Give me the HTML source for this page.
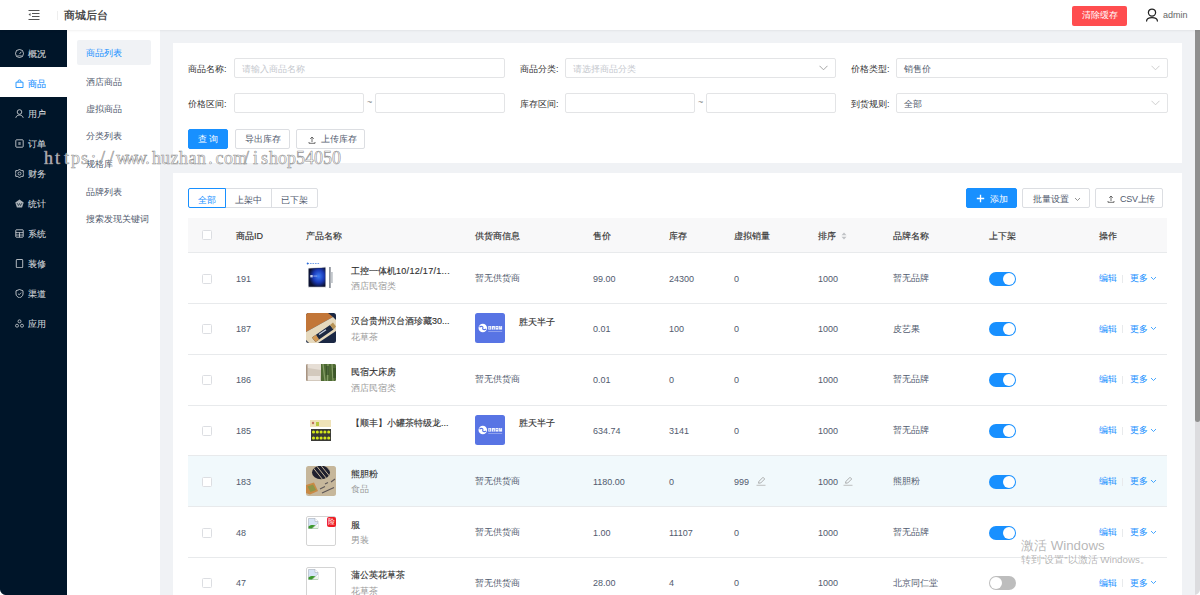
<!DOCTYPE html>
<html><head><meta charset="utf-8">
<style>
*{box-sizing:border-box;margin:0;padding:0}
html,body{width:1200px;height:595px;overflow:hidden;background:#f0f2f5;font-family:"Liberation Sans",sans-serif;font-size:9px;color:#515a6e}
.a{position:absolute}
.t{position:absolute;white-space:nowrap;line-height:12px}
#hdr{left:0;top:0;width:1200px;height:30px;background:#fff;box-shadow:0 1px 2px rgba(0,0,0,.06);z-index:3}
#side{left:0;top:30px;width:67px;height:565px;background:#001529}
.si{position:absolute;left:0;width:67px;height:30px;color:rgba(255,255,255,.78)}
.si .tx{position:absolute;left:28px;top:10.8px;line-height:12px;font-size:9px;-webkit-text-stroke:.1px currentColor}
.si svg{position:absolute;left:15px;top:11.5px}
.si.on{background:#fff;color:#1890ff}
#sub{left:67px;top:30px;width:93px;height:565px;background:#fff}
.ss{position:absolute;left:86px;line-height:12px;color:#515a6e}
.card{position:absolute;left:173px;width:1009px;background:#fff}
.lbl{position:absolute;line-height:12px;color:#333}
.inp{position:absolute;height:20px;border:1px solid #e3e4e6;border-radius:2px;background:#fff}
.ph{position:absolute;left:7px;top:4px;line-height:12px;color:#c5c8ce}
.vl{position:absolute;left:7px;top:4px;line-height:12px;color:#515a6e}
.chev{position:absolute;right:7px;top:6px}
.btn{position:absolute;height:20px;border:1px solid #dcdee2;border-radius:2px;background:#fff;color:#515a6e;line-height:19px;text-align:center}
.btn.pri{background:#1890ff;border-color:#1890ff;color:#fff}
</style><style>
.cb{position:absolute;width:10px;height:10px;border:1px solid #dcdee2;border-radius:1.5px;background:#fff}
.th{position:absolute;white-space:nowrap;line-height:12px;color:#333;-webkit-text-stroke:.15px #333}
.td{position:absolute;white-space:nowrap;line-height:12px;color:#515a6e}
.nm{position:absolute;white-space:nowrap;line-height:12px;color:#333;-webkit-text-stroke:.15px #333}
.lk{color:#1890ff}
.tg{position:absolute;width:27px;height:14px;border-radius:7px;background:#1890ff}
.tg.off{background:#bdbdbd}
.kn{position:absolute;top:1px;width:12px;height:12px;border-radius:6px;background:#fff}
.wm{position:absolute;white-space:nowrap;font-family:"Liberation Serif",serif;font-size:18px;line-height:20px;color:rgba(255,255,255,.8);-webkit-text-stroke:.6px rgba(140,140,140,.95);z-index:10}
</style></head><body>

<!-- header -->
<div id="hdr" class="a">
  <svg class="a" style="left:28px;top:10px" width="12" height="10" viewBox="0 0 12 10">
    <rect x="0.5" y="0" width="11" height="1" fill="#555"/>
    <rect x="4" y="3" width="7.5" height="1" fill="#555"/>
    <rect x="4" y="6" width="7.5" height="1" fill="#555"/>
    <rect x="0.5" y="9" width="11" height="1" fill="#555"/>
    <path d="M0.5 4.5 L2.5 3 L2.5 6 Z" fill="#555"/>
  </svg>
  <div class="a" style="left:57px;top:11px;width:1px;height:9px;background:#eee"></div>
  <div class="t" style="left:63.5px;top:9px;font-size:11.4px;line-height:13px;color:#333;-webkit-text-stroke:.25px #333">商城后台</div>
  <div class="a" style="left:1072px;top:6px;width:55px;height:20px;background:#ff4d4f;border-radius:2px"></div>
  <div class="t" style="left:1082px;top:9px;color:#fff">清除缓存</div>
  <svg class="a" style="left:1145px;top:7.5px" width="14" height="14" viewBox="0 0 14 14"><circle cx="7" cy="4.6" r="3.6" fill="none" stroke="#222" stroke-width="1.25"/><path d="M1.6 13 C1.8 8.6 12.2 8.6 12.4 13" fill="none" stroke="#222" stroke-width="1.25" stroke-linecap="round"/></svg>
  <div class="t" style="left:1163px;top:9px;color:#666">admin</div>
</div>

<!-- sidebar -->
<div id="side" class="a">
  <div class="si" style="top:7px"><svg width="9" height="9" viewBox="0 0 9 9"><circle cx="4.5" cy="4.5" r="4" fill="none" stroke="currentColor" stroke-width=".9"/><path d="M4.5 5 L6.3 2.8" stroke="currentColor" stroke-width=".9"/><path d="M2.2 6.8 H6.8" stroke="currentColor" stroke-width=".7"/></svg><div class="tx">概况</div></div>
  <div class="si on" style="top:37px"><svg width="9" height="9" viewBox="0 0 9 9"><path d="M1 3.2 H8 V8.5 H1 Z" fill="none" stroke="currentColor" stroke-width=".9"/><path d="M3 3.2 V2 C3 .6 6 .6 6 2 V3.2" fill="none" stroke="currentColor" stroke-width=".9"/></svg><div class="tx">商品</div></div>
  <div class="si" style="top:67px"><svg width="9" height="9" viewBox="0 0 9 9"><circle cx="4.5" cy="3" r="2.3" fill="none" stroke="currentColor" stroke-width=".9"/><path d="M.8 8.8 C1.3 5.2 7.7 5.2 8.2 8.8" fill="none" stroke="currentColor" stroke-width=".9"/></svg><div class="tx">用户</div></div>
  <div class="si" style="top:97px"><svg width="9" height="9" viewBox="0 0 9 9"><rect x=".8" y=".8" width="7.4" height="7.4" rx=".8" fill="none" stroke="currentColor" stroke-width=".9"/><rect x="3.3" y="3" width="2.4" height="3" fill="currentColor" opacity=".6"/></svg><div class="tx">订单</div></div>
  <div class="si" style="top:127px"><svg width="9" height="9" viewBox="0 0 9 9"><path d="M4.5 .5 L6.3 1.5 L8.3 1.7 L8.3 3.5 L8.8 4.5 L8.3 5.5 L8.3 7.3 L6.3 7.5 L4.5 8.6 L2.7 7.5 L.7 7.3 L.7 5.5 L.2 4.5 L.7 3.5 L.7 1.7 L2.7 1.5 Z" fill="none" stroke="currentColor" stroke-width=".9"/><circle cx="4.5" cy="4.5" r="1.5" fill="none" stroke="currentColor" stroke-width=".8"/></svg><div class="tx">财务</div></div>
  <div class="si" style="top:157px"><svg width="9" height="9" viewBox="0 0 9 9"><path d="M4.5 .4 L8.7 3.4 L7.1 8.4 L1.9 8.4 L.3 3.4 Z" fill="currentColor" opacity=".85"/><path d="M2 4 L3.5 6.5 L4.5 4.5 L5.5 6.5 L7 4" fill="none" stroke="#001529" stroke-width=".6"/></svg><div class="tx">统计</div></div>
  <div class="si" style="top:187px"><svg width="9" height="9" viewBox="0 0 9 9"><rect x=".8" y=".8" width="7.4" height="7.4" rx=".6" fill="none" stroke="currentColor" stroke-width=".9"/><path d="M.8 3.6 H8.2 M.8 6 H8.2 M4.5 3.6 V8.2" stroke="currentColor" stroke-width=".8"/></svg><div class="tx">系统</div></div>
  <div class="si" style="top:217px"><svg width="9" height="9" viewBox="0 0 9 9"><rect x="1.3" y=".5" width="6.4" height="8.2" rx=".6" fill="none" stroke="currentColor" stroke-width=".9"/></svg><div class="tx">装修</div></div>
  <div class="si" style="top:247px"><svg width="9" height="9" viewBox="0 0 9 9"><path d="M4.5 .5 L8 1.8 V5 C8 7 6 8.3 4.5 8.8 C3 8.3 1 7 1 5 V1.8 Z" fill="none" stroke="currentColor" stroke-width=".9"/><path d="M3 4.7 L4.2 5.8 L6.2 3.6" fill="none" stroke="currentColor" stroke-width=".8"/></svg><div class="tx">渠道</div></div>
  <div class="si" style="top:277px"><svg width="9" height="9" viewBox="0 0 9 9"><circle cx="4.5" cy="2.3" r="1.5" fill="none" stroke="currentColor" stroke-width=".8"/><circle cx="2" cy="6.7" r="1.5" fill="none" stroke="currentColor" stroke-width=".8"/><circle cx="7" cy="6.7" r="1.5" fill="none" stroke="currentColor" stroke-width=".8"/></svg><div class="tx">应用</div></div>
</div>

<!-- sub sidebar -->
<div id="sub" class="a">
  <div class="a" style="left:10px;top:10px;width:74px;height:25px;background:#f0f2f5;border-radius:2px"></div>
</div>
<div class="ss" style="top:47px;color:#1890ff">商品列表</div>
<div class="ss" style="top:75.5px">酒店商品</div>
<div class="ss" style="top:103px">虚拟商品</div>
<div class="ss" style="top:130px">分类列表</div>
<div class="ss" style="top:158px">规格库</div>
<div class="ss" style="top:185.5px">品牌列表</div>
<div class="ss" style="top:213px">搜索发现关键词</div>

<!-- filter card -->
<div class="card" style="top:43px;height:120px"></div>


<div class="lbl" style="left:188px;top:63px">商品名称:</div>
<div class="inp" style="left:234px;top:58px;width:271px"><div class="ph">请输入商品名称</div></div>
<div class="lbl" style="left:520px;top:63px">商品分类:</div>
<div class="inp" style="left:565px;top:58px;width:271px"><div class="ph">请选择商品分类</div><svg class="chev" width="9" height="6" viewBox="0 0 9 6"><path d="M.5 .8 L4.5 4.8 L8.5 .8" fill="none" stroke="#9a9a9a" stroke-width=".9"/></svg></div>
<div class="lbl" style="left:851px;top:63px">价格类型:</div>
<div class="inp" style="left:896px;top:58px;width:272px"><div class="vl">销售价</div><svg class="chev" width="9" height="6" viewBox="0 0 9 6"><path d="M.5 .8 L4.5 4.8 L8.5 .8" fill="none" stroke="#c8c8c8" stroke-width=".9"/></svg></div>

<div class="lbl" style="left:188px;top:98px">价格区间:</div>
<div class="inp" style="left:234px;top:93px;width:130px"></div>
<div class="t" style="left:367px;top:96px;color:#888">~</div>
<div class="inp" style="left:375px;top:93px;width:130px"></div>
<div class="lbl" style="left:520px;top:98px">库存区间:</div>
<div class="inp" style="left:565px;top:93px;width:130px"></div>
<div class="t" style="left:698px;top:96px;color:#888">~</div>
<div class="inp" style="left:706px;top:93px;width:130px"></div>
<div class="lbl" style="left:851px;top:98px">到货规则:</div>
<div class="inp" style="left:896px;top:93px;width:272px"><div class="vl">全部</div><svg class="chev" width="9" height="6" viewBox="0 0 9 6"><path d="M.5 .8 L4.5 4.8 L8.5 .8" fill="none" stroke="#c8c8c8" stroke-width=".9"/></svg></div>

<div class="btn pri" style="left:188px;top:129px;width:40px">查 询</div>
<div class="btn" style="left:235px;top:129px;width:55px">导出库存</div>
<div class="btn" style="left:296px;top:129px;width:69px"><svg class="a" style="left:11px;top:5.5px" width="8" height="8" viewBox="0 0 8 8"><path d="M4 1 V6 M2.2 2.8 L4 1 L5.8 2.8 M1 6 V7.3 H7 V6" fill="none" stroke="#555" stroke-width=".85"/></svg><span style="position:absolute;left:24px;top:0">上传库存</span></div>

<!-- table card -->
<div class="card" style="top:173px;height:422px"></div>
<div class="a" style="left:188px;top:188px;width:130px;height:20px;border:1px solid #dcdee2;border-radius:2px;background:#fff"></div>
<div class="a" style="left:271px;top:188px;width:1px;height:20px;background:#dcdee2"></div>
<div class="a" style="left:188px;top:188px;width:38px;height:20px;border:1px solid #1890ff;border-radius:2px 0 0 2px;background:#fff"></div>
<div class="t" style="left:198px;top:193.5px;color:#1890ff">全部</div>
<div class="t" style="left:235px;top:193.5px;color:#515a6e">上架中</div>
<div class="t" style="left:281px;top:193.5px;color:#515a6e">已下架</div>
<div class="btn pri" style="left:966px;top:188px;width:51px"><svg class="a" style="left:9px;top:4.5px" width="9" height="9" viewBox="0 0 9 9"><path d="M4.5 .8 V8.2 M.8 4.5 H8.2" stroke="#fff" stroke-width="1.35"/></svg><span style="position:absolute;left:23px;top:.6px">添加</span></div>
<div class="btn" style="left:1022px;top:188px;width:68px"><span style="position:absolute;left:10px;top:.6px">批量设置</span><svg class="a" style="left:51px;top:7.5px" width="7" height="5" viewBox="0 0 7 5"><path d="M1 1 L3.5 3.5 L6 1" fill="none" stroke="#777" stroke-width=".8"/></svg></div>
<div class="btn" style="left:1095px;top:188px;width:68px"><svg class="a" style="left:11px;top:5.5px" width="8" height="8" viewBox="0 0 8 8"><path d="M4 1 V6 M2.2 2.8 L4 1 L5.8 2.8 M1 6 V7.3 H7 V6" fill="none" stroke="#555" stroke-width=".85"/></svg><span style="position:absolute;left:24px;top:.6px;letter-spacing:-.3px">CSV上传</span></div>
<div class="a" style="left:188px;top:218px;width:979px;height:35px;background:#f8f8f9;border-bottom:1px solid #e8eaec"></div>
<div class="cb" style="left:202px;top:230px"></div>
<div class="th" style="left:236px;top:229.5px">商品ID</div>
<div class="th" style="left:306px;top:229.5px">产品名称</div>
<div class="th" style="left:475px;top:229.5px">供货商信息</div>
<div class="th" style="left:593px;top:229.5px">售价</div>
<div class="th" style="left:669px;top:229.5px">库存</div>
<div class="th" style="left:734px;top:229.5px">虚拟销量</div>
<div class="th" style="left:818px;top:229.5px">排序</div>
<div class="th" style="left:893px;top:229.5px">品牌名称</div>
<div class="th" style="left:989px;top:229.5px">上下架</div>
<div class="th" style="left:1099px;top:229.5px">操作</div>
<svg class="a" style="left:841px;top:230.5px" width="6" height="10" viewBox="0 0 6 10"><path d="M.5 4.3 L3 1.5 L5.5 4.3 Z M.5 5.7 L3 8.5 L5.5 5.7 Z" fill="#c0c2c6"/></svg>
<div class="a" style="left:188px;top:303px;width:979px;height:1px;background:#e8eaec"></div>
<div class="cb" style="left:202px;top:273.6px"></div>
<div class="td" style="left:236px;top:272.6px">191</div>
<div class="a" style="left:306px;top:262.2px;width:30px;height:30px"><svg width="30" height="30" viewBox="0 0 30 30"><path d="M1.5 1.5 H14" stroke="#6a9ae8" stroke-width=".9" stroke-dasharray="1.6 .9"/><circle cx="1.6" cy="1.5" r=".9" fill="#2a6ad8"/>
<path d="M2 6 L20 4.8 L20 25.5 L2 25.5 Z" fill="#cfd2d7"/><path d="M2.8 6.8 L19.2 5.8 L19.2 24.6 L2.8 24.6 Z" fill="#0b1030"/><defs><radialGradient id="g1" cx=".6" cy=".45" r=".6"><stop offset="0" stop-color="#3c7cf4"/><stop offset=".55" stop-color="#1a3ab8"/><stop offset="1" stop-color="#0b1030"/></radialGradient></defs><path d="M2.8 6.8 L19.2 5.8 L19.2 24.6 L2.8 24.6 Z" fill="url(#g1)"/><rect x="4.3" y="13" width="2.4" height="2.4" fill="#e8eeff" opacity=".85"/><rect x="7.3" y="13.6" width="4" height=".9" fill="#c8d4ff" opacity=".7"/>
<rect x="23" y="5" width="1.8" height="21" fill="#8f959d"/><rect x="24.8" y="10" width="2" height="11" fill="#c3c7cc"/></svg></div>
<div class="nm" style="left:351px;top:264.6px">工控一体机<span style="letter-spacing:.3px">10/12/17/1...</span></div>
<div class="td" style="left:351px;top:279.9px;color:#999">酒店民宿类</div>
<div class="td" style="left:475px;top:271.8px">暂无供货商</div>
<div class="td" style="left:593px;top:272.6px">99.00</div>
<div class="td" style="left:669px;top:272.6px">24300</div>
<div class="td" style="left:734px;top:272.6px">0</div>
<div class="td" style="left:818px;top:272.6px">1000</div>
<div class="td" style="left:893px;top:271.8px">暂无品牌</div>
<div class="tg" style="left:989px;top:271.6px"><div class="kn" style="left:14px"></div></div>
<div class="td lk" style="left:1099px;top:271.8px">编辑</div>
<div class="a" style="left:1122px;top:274.6px;width:1px;height:8px;background:#e8eaec"></div>
<div class="td lk" style="left:1130px;top:271.8px">更多</div>
<div class="a" style="left:1150px;top:275.6px;width:7px;height:5px;line-height:0"><svg width="7" height="5" viewBox="0 0 7 5"><path d="M1 1 L3.5 3.5 L6 1" fill="none" stroke="#1890ff" stroke-width=".8"/></svg></div>
<div class="a" style="left:188px;top:354px;width:979px;height:1px;background:#e8eaec"></div>
<div class="cb" style="left:202px;top:324.4px"></div>
<div class="td" style="left:236px;top:323.4px">187</div>
<div class="a" style="left:306px;top:313.1px;width:30px;height:30px"><svg width="30" height="30" viewBox="0 0 30 30"><defs><clipPath id="c1"><rect width="30" height="30" rx="2.5"/></clipPath></defs><g clip-path="url(#c1)"><rect width="30" height="30" fill="#1b2844"/>
<path d="M0 0 H22 L27 4 L0 19 Z" fill="#c27638"/><path d="M0 19 L27 4 L30 7 V18 L12 30 H3 L0 27 Z" fill="#e6d9bd"/><path d="M6 24.5 L24 12 L27.5 16.5 L9.5 29 Z" fill="#1d2942"/><path d="M6 24.5 L10 21.8 L13.2 26.5 L9.5 29 Z" fill="#d49a55"/><path d="M24 12 L27 9.5 L30 13.5 L27.5 16.5 Z" fill="#b89458"/><path d="M13 21.5 L20 16.7" stroke="#c8d0e0" stroke-width="1.3"/></g></svg></div>
<div class="nm" style="left:351px;top:315.4px">汉台贵州汉台酒珍藏30...</div>
<div class="td" style="left:351px;top:330.7px;color:#999">花草茶</div>
<div class="a" style="left:475px;top:313.1px;width:30px;height:30px"><svg width="30" height="30" viewBox="0 0 30 30"><rect width="30" height="30" rx="2.5" fill="#5874e4"/><circle cx="7.8" cy="15" r="4.3" fill="#fff"/><path d="M4.5 14.2 C6 12.5 8.5 13.8 7.8 15 C7 16.2 9.5 17.5 11.2 15.8" fill="none" stroke="#5874e4" stroke-width="1.1"/><g fill="#fff" opacity=".92"><rect x="13.3" y="13" width="3" height="3.6"/><rect x="16.9" y="13" width="3" height="3.6"/><rect x="20.5" y="13" width="3" height="3.6"/><rect x="24.1" y="13" width="3" height="3.6"/></g><g fill="#5874e4"><rect x="14.5" y="13.6" width=".6" height="2.5"/><rect x="18" y="14.4" width=".6" height="2.2"/><rect x="21.2" y="14.2" width="1.5" height=".6"/><rect x="25" y="13.6" width="1.3" height=".6"/></g><rect x="13.2" y="18.2" width="14" height=".6" fill="#fff" opacity=".55"/></svg></div>
<div class="nm" style="left:519px;top:315.5px">胜天半子</div>
<div class="td" style="left:593px;top:323.4px">0.01</div>
<div class="td" style="left:669px;top:323.4px">100</div>
<div class="td" style="left:734px;top:323.4px">0</div>
<div class="td" style="left:818px;top:323.4px">1000</div>
<div class="td" style="left:893px;top:322.6px">皮艺果</div>
<div class="tg" style="left:989px;top:322.4px"><div class="kn" style="left:14px"></div></div>
<div class="td lk" style="left:1099px;top:322.6px">编辑</div>
<div class="a" style="left:1122px;top:325.4px;width:1px;height:8px;background:#e8eaec"></div>
<div class="td lk" style="left:1130px;top:322.6px">更多</div>
<div class="a" style="left:1150px;top:326.4px;width:7px;height:5px;line-height:0"><svg width="7" height="5" viewBox="0 0 7 5"><path d="M1 1 L3.5 3.5 L6 1" fill="none" stroke="#1890ff" stroke-width=".8"/></svg></div>
<div class="a" style="left:188px;top:405px;width:979px;height:1px;background:#e8eaec"></div>
<div class="cb" style="left:202px;top:375.2px"></div>
<div class="td" style="left:236px;top:374.2px">186</div>
<div class="a" style="left:306px;top:363.9px;width:30px;height:30px"><svg width="30" height="30" viewBox="0 0 30 30"><defs><clipPath id="c4"><rect width="30" height="17" rx="1.5"/></clipPath></defs><g clip-path="url(#c4)"><rect x="0" y="0" width="30" height="17" fill="#d3c9bd"/><path d="M0 0 H22 L15 6 L2 4 Z" fill="#e6ded5"/><rect x="0" y="0" width="1.5" height="17" fill="#a89482"/><rect x="2" y="12" width="12" height="4" fill="#ece6e0"/><rect x="15" y="0" width="15" height="17" fill="#4f6a34"/><path d="M17 0 L19 17 M22 0 L21.5 17 M26 0 L27 17" stroke="#a2b882" stroke-width="1.3" opacity=".65"/><rect x="20" y="2" width="3" height="9" fill="#2c4420" opacity=".55"/><rect x="27" y="4" width="3" height="10" fill="#2c4420" opacity=".5"/></g></svg></div>
<div class="nm" style="left:351px;top:366.2px">民宿大床房</div>
<div class="td" style="left:351px;top:381.5px;color:#999">酒店民宿类</div>
<div class="td" style="left:475px;top:373.4px">暂无供货商</div>
<div class="td" style="left:593px;top:374.2px">0.01</div>
<div class="td" style="left:669px;top:374.2px">0</div>
<div class="td" style="left:734px;top:374.2px">0</div>
<div class="td" style="left:818px;top:374.2px">1000</div>
<div class="td" style="left:893px;top:373.4px">暂无品牌</div>
<div class="tg" style="left:989px;top:373.2px"><div class="kn" style="left:14px"></div></div>
<div class="td lk" style="left:1099px;top:373.4px">编辑</div>
<div class="a" style="left:1122px;top:376.2px;width:1px;height:8px;background:#e8eaec"></div>
<div class="td lk" style="left:1130px;top:373.4px">更多</div>
<div class="a" style="left:1150px;top:377.2px;width:7px;height:5px;line-height:0"><svg width="7" height="5" viewBox="0 0 7 5"><path d="M1 1 L3.5 3.5 L6 1" fill="none" stroke="#1890ff" stroke-width=".8"/></svg></div>
<div class="a" style="left:188px;top:455px;width:979px;height:1px;background:#e8eaec"></div>
<div class="cb" style="left:202px;top:426.0px"></div>
<div class="td" style="left:236px;top:425.0px">185</div>
<div class="a" style="left:306px;top:414.7px;width:30px;height:30px"><svg width="30" height="30" viewBox="0 0 30 30"><rect x="4" y="5" width="21" height="7" fill="#efe2b8"/><rect x="10" y="7" width="3" height="4" fill="#b8c840"/><circle cx="7" cy="8" r="1.2" fill="#c07060"/><rect x="5" y="14" width="20" height="12" fill="#3a3a36"/>
<g fill="#d4e81a"><circle cx="7.5" cy="17" r="1.55"/><circle cx="11.3" cy="17" r="1.55"/><circle cx="15.1" cy="17" r="1.55"/><circle cx="18.9" cy="17" r="1.55"/><circle cx="22.7" cy="17" r="1.55"/><circle cx="7.5" cy="23" r="1.55"/><circle cx="11.3" cy="23" r="1.55"/><circle cx="15.1" cy="23" r="1.55"/><circle cx="18.9" cy="23" r="1.55"/><circle cx="22.7" cy="23" r="1.55"/></g></svg></div>
<div class="nm" style="left:351px;top:417.0px">【顺丰】小罐茶特级龙...</div>
<div class="a" style="left:475px;top:414.7px;width:30px;height:30px"><svg width="30" height="30" viewBox="0 0 30 30"><rect width="30" height="30" rx="2.5" fill="#5874e4"/><circle cx="7.8" cy="15" r="4.3" fill="#fff"/><path d="M4.5 14.2 C6 12.5 8.5 13.8 7.8 15 C7 16.2 9.5 17.5 11.2 15.8" fill="none" stroke="#5874e4" stroke-width="1.1"/><g fill="#fff" opacity=".92"><rect x="13.3" y="13" width="3" height="3.6"/><rect x="16.9" y="13" width="3" height="3.6"/><rect x="20.5" y="13" width="3" height="3.6"/><rect x="24.1" y="13" width="3" height="3.6"/></g><g fill="#5874e4"><rect x="14.5" y="13.6" width=".6" height="2.5"/><rect x="18" y="14.4" width=".6" height="2.2"/><rect x="21.2" y="14.2" width="1.5" height=".6"/><rect x="25" y="13.6" width="1.3" height=".6"/></g><rect x="13.2" y="18.2" width="14" height=".6" fill="#fff" opacity=".55"/></svg></div>
<div class="nm" style="left:519px;top:417.1px">胜天半子</div>
<div class="td" style="left:593px;top:425.0px">634.74</div>
<div class="td" style="left:669px;top:425.0px">3141</div>
<div class="td" style="left:734px;top:425.0px">0</div>
<div class="td" style="left:818px;top:425.0px">1000</div>
<div class="td" style="left:893px;top:424.2px">暂无品牌</div>
<div class="tg" style="left:989px;top:424.0px"><div class="kn" style="left:14px"></div></div>
<div class="td lk" style="left:1099px;top:424.2px">编辑</div>
<div class="a" style="left:1122px;top:427.0px;width:1px;height:8px;background:#e8eaec"></div>
<div class="td lk" style="left:1130px;top:424.2px">更多</div>
<div class="a" style="left:1150px;top:428.0px;width:7px;height:5px;line-height:0"><svg width="7" height="5" viewBox="0 0 7 5"><path d="M1 1 L3.5 3.5 L6 1" fill="none" stroke="#1890ff" stroke-width=".8"/></svg></div>
<div class="a" style="left:188px;top:456px;width:979px;height:50px;background:#f1f9fc"></div>
<div class="a" style="left:188px;top:506px;width:979px;height:1px;background:#e8eaec"></div>
<div class="cb" style="left:202px;top:476.8px"></div>
<div class="td" style="left:236px;top:475.8px">183</div>
<div class="a" style="left:306px;top:465.5px;width:30px;height:30px"><svg width="30" height="30" viewBox="0 0 30 30"><defs><clipPath id="c2"><rect width="30" height="30" rx="2.5"/></clipPath><clipPath id="c3"><ellipse cx="15" cy="6.5" rx="9" ry="6.8"/></clipPath></defs><g clip-path="url(#c2)"><rect width="30" height="30" fill="#c6b79b"/>
<ellipse cx="15" cy="6.5" rx="9" ry="6.8" fill="#20202e"/><g clip-path="url(#c3)" stroke="#c6b79b" stroke-width="1"><path d="M5 -1 L17 14 M9 -2 L21 13 M13 -3 L25 12 M17 -4 L29 11"/></g>
<path d="M19 18 L22 16.5 M14 23 L19 20.5 M16 27 L28 21.5 M25 16 L29 13" stroke="#3a3640" stroke-width="1.1" opacity=".75"/>
<path d="M0 19 L8 16.5 L12 25 L4 28.5 L0 27 Z" fill="#c98a45"/><path d="M1.5 20.5 L7 18.5 L10 24 L4.5 26 Z" fill="#8e9648"/></g></svg></div>
<div class="nm" style="left:351px;top:467.8px">熊胆粉</div>
<div class="td" style="left:351px;top:483.1px;color:#999">食品</div>
<div class="td" style="left:475px;top:475.0px">暂无供货商</div>
<div class="td" style="left:593px;top:475.8px">1180.00</div>
<div class="td" style="left:669px;top:475.8px">0</div>
<div class="td" style="left:734px;top:475.8px">999</div>
<div class="td" style="left:818px;top:475.8px">1000</div>
<svg class="a" style="left:756px;top:475.8px" width="10" height="10" viewBox="0 0 10 10"><path d="M2.5 7.2 L3 5.3 L7 1.3 L8.7 3 L4.7 7 Z" fill="none" stroke="#9a9a9a" stroke-width=".8"/><path d="M.5 9.3 H9.5" stroke="#b0b0b0" stroke-width=".8"/></svg>
<svg class="a" style="left:843px;top:475.8px" width="10" height="10" viewBox="0 0 10 10"><path d="M2.5 7.2 L3 5.3 L7 1.3 L8.7 3 L4.7 7 Z" fill="none" stroke="#9a9a9a" stroke-width=".8"/><path d="M.5 9.3 H9.5" stroke="#b0b0b0" stroke-width=".8"/></svg>
<div class="td" style="left:893px;top:475.0px">熊胆粉</div>
<div class="tg" style="left:989px;top:474.8px"><div class="kn" style="left:14px"></div></div>
<div class="td lk" style="left:1099px;top:475.0px">编辑</div>
<div class="a" style="left:1122px;top:477.8px;width:1px;height:8px;background:#e8eaec"></div>
<div class="td lk" style="left:1130px;top:475.0px">更多</div>
<div class="a" style="left:1150px;top:478.8px;width:7px;height:5px;line-height:0"><svg width="7" height="5" viewBox="0 0 7 5"><path d="M1 1 L3.5 3.5 L6 1" fill="none" stroke="#1890ff" stroke-width=".8"/></svg></div>
<div class="a" style="left:188px;top:557px;width:979px;height:1px;background:#e8eaec"></div>
<div class="cb" style="left:202px;top:527.6px"></div>
<div class="td" style="left:236px;top:526.6px">48</div>
<div class="a" style="left:306px;top:516.3px;width:30px;height:30px"><svg width="30" height="30" viewBox="0 0 30 30"><rect x=".5" y=".5" width="29" height="29" rx="1.5" fill="#fff" stroke="#d4d4d4"/><path d="M2.5 2.5 H9 L12 5.5 V12.5 H2.5 Z" fill="#d6e4f6" stroke="#a8b0bb" stroke-width=".6"/><path d="M9 2.5 V5.5 H12" fill="#fff" stroke="#a8b0bb" stroke-width=".6"/><path d="M2.5 12.5 V10.5 C5 8.5 8 8.8 12 10 V12.5 Z" fill="#3d9a2c"/><path d="M6 12.5 L12 7 V12.5 Z" fill="#fff" opacity=".9"/><path d="M6 12.5 L12 7" stroke="#a8b0bb" stroke-width=".5"/></svg></div>
<div class="a" style="left:327px;top:517.3px;width:9px;height:10px;background:#ee1c25;border-radius:2px;color:#fff;font-size:7px;line-height:10px;text-align:center">险</div>
<div class="nm" style="left:351px;top:518.6px">服</div>
<div class="td" style="left:351px;top:533.9px;color:#999">男装</div>
<div class="td" style="left:475px;top:525.8px">暂无供货商</div>
<div class="td" style="left:593px;top:526.6px">1.00</div>
<div class="td" style="left:669px;top:526.6px">11107</div>
<div class="td" style="left:734px;top:526.6px">0</div>
<div class="td" style="left:818px;top:526.6px">1000</div>
<div class="td" style="left:893px;top:525.8px">暂无品牌</div>
<div class="tg" style="left:989px;top:525.6px"><div class="kn" style="left:14px"></div></div>
<div class="td lk" style="left:1099px;top:525.8px">编辑</div>
<div class="a" style="left:1122px;top:528.6px;width:1px;height:8px;background:#e8eaec"></div>
<div class="td lk" style="left:1130px;top:525.8px">更多</div>
<div class="a" style="left:1150px;top:529.6px;width:7px;height:5px;line-height:0"><svg width="7" height="5" viewBox="0 0 7 5"><path d="M1 1 L3.5 3.5 L6 1" fill="none" stroke="#1890ff" stroke-width=".8"/></svg></div>
<div class="a" style="left:188px;top:608px;width:979px;height:1px;background:#e8eaec"></div>
<div class="cb" style="left:202px;top:578.4px"></div>
<div class="td" style="left:236px;top:577.4px">47</div>
<div class="a" style="left:306px;top:567.1px;width:30px;height:30px"><svg width="30" height="30" viewBox="0 0 30 30"><rect x=".5" y=".5" width="29" height="29" rx="1.5" fill="#fff" stroke="#d4d4d4"/><path d="M2.5 2.5 H9 L12 5.5 V12.5 H2.5 Z" fill="#d6e4f6" stroke="#a8b0bb" stroke-width=".6"/><path d="M9 2.5 V5.5 H12" fill="#fff" stroke="#a8b0bb" stroke-width=".6"/><path d="M2.5 12.5 V10.5 C5 8.5 8 8.8 12 10 V12.5 Z" fill="#3d9a2c"/><path d="M6 12.5 L12 7 V12.5 Z" fill="#fff" opacity=".9"/><path d="M6 12.5 L12 7" stroke="#a8b0bb" stroke-width=".5"/></svg></div>
<div class="nm" style="left:351px;top:569.4px">蒲公英花草茶</div>
<div class="td" style="left:351px;top:584.7px;color:#999">花草茶</div>
<div class="td" style="left:475px;top:576.6px">暂无供货商</div>
<div class="td" style="left:593px;top:577.4px">28.00</div>
<div class="td" style="left:669px;top:577.4px">4</div>
<div class="td" style="left:734px;top:577.4px">0</div>
<div class="td" style="left:818px;top:577.4px">1000</div>
<div class="td" style="left:893px;top:576.6px">北京同仁堂</div>
<div class="tg off" style="left:989px;top:576.4px"><div class="kn" style="left:1px"></div></div>
<div class="td lk" style="left:1099px;top:576.6px">编辑</div>
<div class="a" style="left:1122px;top:579.4px;width:1px;height:8px;background:#e8eaec"></div>
<div class="td lk" style="left:1130px;top:576.6px">更多</div>
<div class="a" style="left:1150px;top:580.4px;width:7px;height:5px;line-height:0"><svg width="7" height="5" viewBox="0 0 7 5"><path d="M1 1 L3.5 3.5 L6 1" fill="none" stroke="#1890ff" stroke-width=".8"/></svg></div>
<div class="wm" style="left:44px;top:148px"><span style="display:inline-block;width:9px;text-align:center">h</span><span style="display:inline-block;width:9px;text-align:center">t</span><span style="display:inline-block;width:9px;text-align:center">t</span><span style="display:inline-block;width:9px;text-align:center">p</span><span style="display:inline-block;width:9px;text-align:center">s</span><span style="display:inline-block;width:9px;text-align:center">:</span><span style="display:inline-block;width:9px;text-align:center">/</span><span style="display:inline-block;width:9px;text-align:center">/</span><span style="display:inline-block;width:9px;text-align:center">w</span><span style="display:inline-block;width:9px;text-align:center">w</span><span style="display:inline-block;width:9px;text-align:center">w</span><span style="display:inline-block;width:9px;text-align:center">.</span><span style="display:inline-block;width:9px;text-align:center">h</span><span style="display:inline-block;width:9px;text-align:center">u</span><span style="display:inline-block;width:9px;text-align:center">z</span><span style="display:inline-block;width:9px;text-align:center">h</span><span style="display:inline-block;width:9px;text-align:center">a</span><span style="display:inline-block;width:9px;text-align:center">n</span><span style="display:inline-block;width:9px;text-align:center">.</span><span style="display:inline-block;width:9px;text-align:center">c</span><span style="display:inline-block;width:9px;text-align:center">o</span><span style="display:inline-block;width:9px;text-align:center">m</span><span style="display:inline-block;width:9px;text-align:center">/</span><span style="display:inline-block;width:9px;text-align:center">i</span><span style="display:inline-block;width:9px;text-align:center">s</span><span style="display:inline-block;width:9px;text-align:center">h</span><span style="display:inline-block;width:9px;text-align:center">o</span><span style="display:inline-block;width:9px;text-align:center">p</span><span style="display:inline-block;width:9px;text-align:center">5</span><span style="display:inline-block;width:9px;text-align:center">4</span><span style="display:inline-block;width:9px;text-align:center">0</span><span style="display:inline-block;width:9px;text-align:center">5</span><span style="display:inline-block;width:9px;text-align:center">0</span></div>
<div class="t" style="left:1021px;top:538px;font-size:13.3px;line-height:15px;color:rgba(120,120,120,.55)">激活 Windows</div>
<div class="t" style="left:1021px;top:554px;font-size:9.8px;line-height:11px;color:rgba(120,120,120,.55)">转到“设置”以激活 Windows。</div>

<!-- scrollbar -->
<div class="a" style="left:1195px;top:30px;width:5px;height:565px;background:#dcdcdf"></div>
<div class="a" style="left:0;top:589px;width:6px;height:6px;background:radial-gradient(circle at 6px 0,rgba(255,255,255,0) 5.5px,#fff 6.5px);z-index:20"></div>
<div class="a" style="left:1194px;top:589px;width:6px;height:6px;background:radial-gradient(circle at 0 0,rgba(255,255,255,0) 5.5px,#fff 6.5px);z-index:20"></div>
<div class="a" style="left:1195px;top:30px;width:5px;height:392px;background:#8f8f8f;border-radius:0 0 2.5px 2.5px"></div>

</body></html>
